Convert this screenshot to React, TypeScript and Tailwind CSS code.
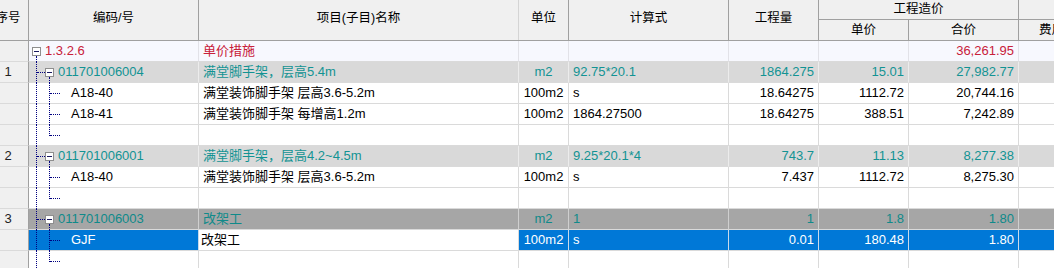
import React from "react";

type Kind = "root" | "bill" | "dark" | "item" | "selected";

type Row = {
  seq?: string;
  level: 0 | 1 | 2;
  last?: boolean;
  kind: Kind;
  code?: string;
  name?: string;
  unit?: string;
  calc?: string;
  qty?: string;
  price?: string;
  total?: string;
};

const rows: Row[] = [
  { level: 0, kind: "root", code: "1.3.2.6", name: "单价措施", total: "36,261.95" },
  {
    seq: "1",
    level: 1,
    kind: "bill",
    code: "011701006004",
    name: "满堂脚手架，层高5.4m",
    unit: "m2",
    calc: "92.75*20.1",
    qty: "1864.275",
    price: "15.01",
    total: "27,982.77",
  },
  {
    level: 2,
    kind: "item",
    code: "A18-40",
    name: "满堂装饰脚手架 层高3.6-5.2m",
    unit: "100m2",
    calc: "s",
    qty: "18.64275",
    price: "1112.72",
    total: "20,744.16",
  },
  {
    level: 2,
    kind: "item",
    code: "A18-41",
    name: "满堂装饰脚手架 每增高1.2m",
    unit: "100m2",
    calc: "1864.27500",
    qty: "18.64275",
    price: "388.51",
    total: "7,242.89",
  },
  { level: 2, last: true, kind: "item" },
  {
    seq: "2",
    level: 1,
    kind: "bill",
    code: "011701006001",
    name: "满堂脚手架，层高4.2~4.5m",
    unit: "m2",
    calc: "9.25*20.1*4",
    qty: "743.7",
    price: "11.13",
    total: "8,277.38",
  },
  {
    level: 2,
    kind: "item",
    code: "A18-40",
    name: "满堂装饰脚手架 层高3.6-5.2m",
    unit: "100m2",
    calc: "s",
    qty: "7.437",
    price: "1112.72",
    total: "8,275.30",
  },
  { level: 2, last: true, kind: "item" },
  {
    seq: "3",
    level: 1,
    kind: "dark",
    code: "011701006003",
    name: "改架工",
    unit: "m2",
    calc: "1",
    qty: "1",
    price: "1.8",
    total: "1.80",
  },
  {
    level: 2,
    kind: "selected",
    code: "GJF",
    name: "改架工",
    unit: "100m2",
    calc: "s",
    qty: "0.01",
    price: "180.48",
    total: "1.80",
  },
  { level: 2, last: true, kind: "item" },
];

const rowStyle: Record<Kind, string> = {
  root: "bg-[#f7f8fe] text-[#c8203a] border-r-[#e2e2e8]",
  bill: "bg-[#d9d9d9] text-[#129393] border-r-[#ececec]",
  dark: "bg-[#a6a6a6] text-[#0f8a8a] border-r-[#cfcfcf]",
  item: "bg-white text-black border-r-[#dadada]",
  selected: "bg-[#0078d7] text-white border-r-[#c9d9ea]",
};

const codePad = ["pl-[16px]", "pl-[29px]", "pl-[42px]"];

const VLine = ({ className }: { className: string }) => (
  <span className={`absolute w-0 border-l border-dotted border-[#000080] ${className}`} />
);

const HLine = ({ className }: { className: string }) => (
  <span className={`absolute h-0 border-t border-dotted border-[#000080] ${className}`} />
);

const MinusBox = ({ className }: { className: string }) => (
  <span
    className={`absolute top-[6px] flex h-[9px] w-[9px] items-center justify-center border border-[#8e8e8e] bg-white ${className}`}
  >
    <span className="h-px w-[5px] bg-[#1a1a60]" />
  </span>
);

const Tree = ({ row }: { row: Row }) => {
  if (row.level === 0) {
    return (
      <>
        <VLine className="left-[7px] top-[15px] -bottom-px" />
        <MinusBox className="left-[3px]" />
      </>
    );
  }
  if (row.level === 1) {
    return (
      <>
        <VLine className="left-[7px] top-0 -bottom-px" />
        <HLine className="left-[8px] top-[10px] w-[8px]" />
        <VLine className="left-[20px] top-[15px] -bottom-px" />
        <MinusBox className="left-[16px]" />
      </>
    );
  }
  return (
    <>
      <VLine className="left-[7px] top-0 -bottom-px" />
      {row.last ? (
        <VLine className="left-[20px] top-0 h-[11px]" />
      ) : (
        <VLine className="left-[20px] top-0 -bottom-px" />
      )}
      <HLine className="left-[21px] top-[10px] w-[10px]" />
    </>
  );
};

const DataRow = ({ row }: { row: Row }) => {
  const s = rowStyle[row.kind];
  const cell = `flex shrink-0 items-center border-r border-b border-b-[#dadada] leading-[20px] ${s}`;
  const nameCell =
    row.kind === "selected"
      ? "flex w-[320px] shrink-0 items-center border-r border-b border-b-[#dadada] border-r-[#dadada] bg-white pl-[2px] leading-[20px] text-black"
      : `${cell} w-[320px] pl-[4px]`;
  return (
    <div className="flex h-[21px]">
      <div className="flex w-[41px] shrink-0 items-center justify-center border-r border-b border-r-[#a0a0a0] border-b-[#dadada] bg-[#f0f0f0] text-[#222]">
        {row.seq}
      </div>
      <div className={`${cell} relative w-[170px] ${codePad[row.level]}`}>
        <Tree row={row} />
        <span>{row.code}</span>
      </div>
      <div className={nameCell}>{row.name}</div>
      <div className={`${cell} w-[50px] justify-center`}>{row.unit}</div>
      <div className={`${cell} w-[160px] pl-[4px]`}>{row.calc}</div>
      <div className={`${cell} w-[90px] justify-end pr-[4px]`}>{row.qty}</div>
      <div className={`${cell} w-[90px] justify-end pr-[4px]`}>{row.price}</div>
      <div className={`${cell} w-[110px] justify-end pr-[4px]`}>{row.total}</div>
      <div className={`${cell} w-[100px]`} />
    </div>
  );
};

const Header = () => (
  <div className="flex h-[41px] border-b border-[#a0a0a0] bg-[#f0f0f0] text-[12.5px] text-black">
    <div className="flex w-[41px] shrink-0 items-center justify-center border-r border-[#a0a0a0] pb-[3px]">
      序号
    </div>
    <div className="flex w-[170px] shrink-0 items-center justify-center border-r border-[#a0a0a0] pb-[3px]">
      编码/号
    </div>
    <div className="flex w-[320px] shrink-0 items-center justify-center border-r border-[#d4d4d4] pb-[3px]">
      项目(子目)名称
    </div>
    <div className="flex w-[50px] shrink-0 items-center justify-center border-r border-[#a0a0a0] pb-[3px]">
      单位
    </div>
    <div className="flex w-[160px] shrink-0 items-center justify-center border-r border-[#a0a0a0] pb-[3px]">
      计算式
    </div>
    <div className="flex w-[90px] shrink-0 items-center justify-center border-r border-[#a0a0a0] pb-[3px]">
      工程量
    </div>
    <div className="flex w-[200px] shrink-0 flex-col border-r border-[#a0a0a0]">
      <div className="flex h-[20px] items-center justify-center border-b border-[#a0a0a0] pb-[1px]">
        工程造价
      </div>
      <div className="flex flex-1">
        <div className="flex w-[90px] items-center justify-center border-r border-[#a0a0a0]">
          单价
        </div>
        <div className="flex flex-1 items-center justify-center">合价</div>
      </div>
    </div>
    <div className="flex w-[90px] shrink-0 flex-col">
      <div className="h-[20px] border-b border-[#a0a0a0]" />
      <div className="flex flex-1 items-center justify-center whitespace-nowrap">费用类别</div>
    </div>
  </div>
);

export default function App() {
  return (
    <div className="h-[268px] w-[1054px] overflow-hidden bg-white font-['Liberation_Sans','Noto_Sans_CJK_SC',sans-serif] text-[13px]">
      <div className="-ml-[12px] w-[1200px]">
        <Header />
        {rows.map((row, i) => (
          <DataRow key={i} row={row} />
        ))}
      </div>
    </div>
  );
}
